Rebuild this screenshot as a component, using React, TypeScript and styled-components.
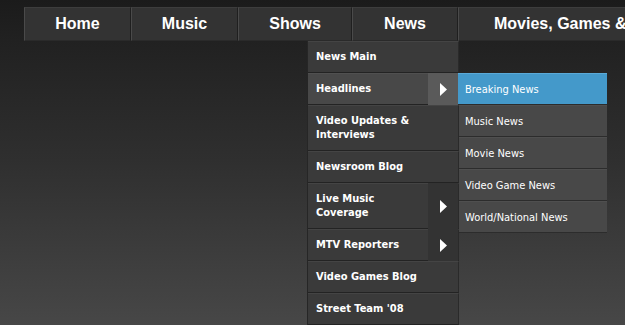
import { createGlobalStyle } from "styled-components";
import styled from "styled-components";

const GlobalStyle = createGlobalStyle`
  html, body {
    margin: 0;
    padding: 0;
  }
  body {
    width: 625px;
    height: 325px;
    overflow: hidden;
    background: linear-gradient(to bottom, #1b1b1b 0px, #212121 40px, #2f2f2f 160px, #474747 325px);
    font-family: "DejaVu Sans Condensed", "DejaVu Sans", Verdana, sans-serif;
    color: #fff;
  }
`;

const Page = styled.div`
  padding: 7px 0 0 24px;
`;

const NavBar = styled.ul`
  display: flex;
  margin: 0;
  padding: 0;
  list-style: none;
  height: 34px;
`;

const NavItem = styled.li<{ $w: number }>`
  position: relative;
  flex: 0 0 ${(p) => p.$w}px;
  box-sizing: border-box;
  display: flex;
  align-items: center;
  justify-content: center;
  background: #333;
  border-top: 1px solid #3d3d3d;
  border-left: 1px solid #4a4a4a;
  border-right: 1px solid #1f1f1f;
  border-bottom: 1px solid #2a2a2a;
  white-space: nowrap;
`;

const NavLabel = styled.span<{ $left?: boolean }>`
  font-family: "Liberation Sans", Arial, sans-serif;
  font-weight: bold;
  font-size: 16px;
  ${(p) => (p.$left ? "margin-left: 35px; margin-right: auto;" : "")}
`;

const Dropdown = styled.ul`
  position: absolute;
  top: 33px;
  left: -46px;
  width: 151px;
  margin: 0;
  padding: 0;
  list-style: none;
  border-left: 1px solid #262626;
  font-family: "DejaVu Sans Condensed", "DejaVu Sans", Verdana, sans-serif;
`;

const DropItem = styled.li<{ $active?: boolean }>`
  position: relative;
  display: flex;
  box-sizing: border-box;
  background: ${(p) => (p.$active ? "#484848" : "#3a3a3a")};
  border-top: 1px solid ${(p) => (p.$active ? "#505050" : "#444")};
  border-bottom: 1px solid #232323;
  border-right: 1px solid #2a2a2a;
`;

const DropLabel = styled.span<{ $arrow?: boolean }>`
  flex: 1;
  padding: 8px ${(p) => (p.$arrow ? 6 : 36)}px 8px 8px;
  font-size: 11px;
  font-weight: bold;
  line-height: 14px;
  text-align: left;
  white-space: normal;
`;

const ArrowCell = styled.span<{ $active?: boolean }>`
  flex: 0 0 30px;
  display: flex;
  align-items: center;
  justify-content: center;
  margin: -1px 0;
  background: ${(p) => (p.$active ? "#5a5a5a" : "#333")};
`;

const SubMenu = styled.ul`
  position: absolute;
  top: -1px;
  left: 150px;
  width: 149px;
  margin: 0;
  padding: 0;
  list-style: none;
`;

const SubItem = styled.li<{ $active?: boolean }>`
  box-sizing: border-box;
  height: 32px;
  padding: 0 7px;
  display: flex;
  align-items: center;
  background: ${(p) => (p.$active ? "#4499ca" : "#484848")};
  border-top: 1px solid ${(p) => (p.$active ? "#5aaad8" : "#4f4f4f")};
  border-bottom: 1px solid #2c2c2c;
  font-size: 11px;
  font-weight: normal;
  white-space: nowrap;
`;

const Arrow = () => (
  <svg width="7" height="13" viewBox="0 0 7 13">
    <path d="M0 0 L7 6.5 L0 13 Z" fill="#fff" />
  </svg>
);

const subItems = [
  "Breaking News",
  "Music News",
  "Movie News",
  "Video Game News",
  "World/National News",
];

type Drop = { label: string; arrow?: boolean; active?: boolean };

const dropItems: Drop[] = [
  { label: "News Main" },
  { label: "Headlines", arrow: true, active: true },
  { label: "Video Updates & Interviews" },
  { label: "Newsroom Blog" },
  { label: "Live Music Coverage", arrow: true },
  { label: "MTV Reporters", arrow: true },
  { label: "Video Games Blog" },
  { label: "Street Team '08" },
];

export default function App() {
  return (
    <>
      <GlobalStyle />
      <Page>
        <NavBar>
          <NavItem $w={107}>
            <NavLabel>Home</NavLabel>
          </NavItem>
          <NavItem $w={107}>
            <NavLabel>Music</NavLabel>
          </NavItem>
          <NavItem $w={114}>
            <NavLabel>Shows</NavLabel>
          </NavItem>
          <NavItem $w={106}>
            <NavLabel>News</NavLabel>
            <Dropdown>
              {dropItems.map((d) => (
                <DropItem key={d.label} $active={d.active}>
                  <DropLabel $arrow={d.arrow}>{d.label}</DropLabel>
                  {d.arrow && (
                    <ArrowCell $active={d.active}>
                      <Arrow />
                    </ArrowCell>
                  )}
                  {d.active && (
                    <SubMenu>
                      {subItems.map((s, i) => (
                        <SubItem key={s} $active={i === 0}>
                          {s}
                        </SubItem>
                      ))}
                    </SubMenu>
                  )}
                </DropItem>
              ))}
            </Dropdown>
          </NavItem>
          <NavItem $w={200}>
            <NavLabel $left>Movies, Games &amp; More</NavLabel>
          </NavItem>
        </NavBar>
      </Page>
    </>
  );
}
